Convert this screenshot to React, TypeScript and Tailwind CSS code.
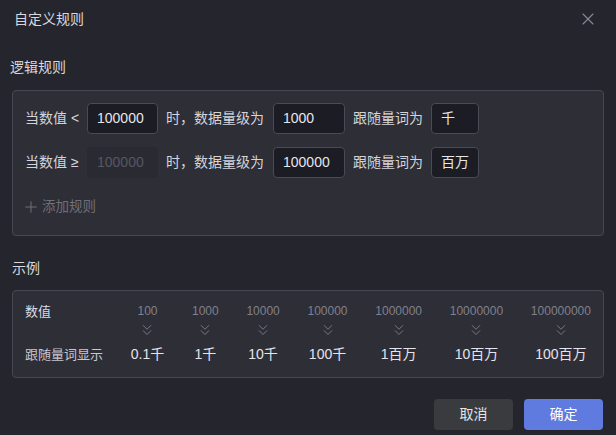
import { X, Plus, ChevronsDown } from 'lucide-react';

const FONT = { fontFamily: '"Liberation Sans", "Noto Sans CJK SC", sans-serif' };

const RULES = [
  { op: '<', from: '100000', disabled: false, level: '1000', unit: '千' },
  { op: '≥', from: '100000', disabled: true, level: '100000', unit: '百万' },
];

const EXAMPLES = [
  { value: '100', label: '0.1千' },
  { value: '1000', label: '1千' },
  { value: '10000', label: '10千' },
  { value: '100000', label: '100千' },
  { value: '1000000', label: '1百万' },
  { value: '10000000', label: '10百万' },
  { value: '100000000', label: '100百万' },
];

function Box({ value, w, disabled }: { value: string; w: string; disabled?: boolean }) {
  return (
    <div
      className={
        disabled
          ? `${w} h-[31px] rounded-[4px] bg-[#2a2a32] flex items-center px-[10px] text-[14px] text-[#575761]`
          : `${w} h-[31px] rounded-[4px] bg-[#1c1c24] border border-[#4a4a55] flex items-center px-[9px] text-[14px] text-[#e6e6ea]`
      }
    >
      <span className="overflow-hidden whitespace-nowrap">{value}</span>
    </div>
  );
}

export default function App() {
  return (
    <div className="w-[616px] h-[435px] bg-[#25252e] text-[#d4d4da] overflow-hidden" style={FONT}>
      <div className="h-[38px] flex items-center justify-between pl-[14px] pr-[18px]">
        <span className="text-[14px] text-[#d8d8de]">自定义规则</span>
        <X className="w-[20px] h-[20px] text-[#8a8a96]" strokeWidth={1.3} />
      </div>

      <div className="px-[12px]">
        <div className="mt-[19px] -ml-[2px] text-[14px] leading-[20px] text-[#d8d8de]">逻辑规则</div>

        <div className="mt-[13px] h-[146px] rounded-[4px] border border-[#474751] bg-[#2e2e37] pt-[12px] px-[12px]">
          <div className="flex flex-col gap-[13px]">
            {RULES.map((r, i) => (
              <div key={i} className="flex items-center text-[14px]">
                <span className="w-[62px]">当数值 {r.op}</span>
                <Box value={r.from} w="w-[71px]" disabled={r.disabled} />
                <span className="ml-[8px] w-[107px]">时，数据量级为</span>
                <Box value={r.level} w="w-[72px]" />
                <span className="ml-[8px] w-[78px]">跟随量词为</span>
                <Box value={r.unit} w="w-[48px]" />
              </div>
            ))}
          </div>
          <div className="mt-[19px] flex items-center gap-[2px] text-[13.5px] text-[#6f6f7a]">
            <Plus className="-ml-[3px] w-[18px] h-[18px]" strokeWidth={1.3} />
            <span>添加规则</span>
          </div>
        </div>

        <div className="mt-[22px] text-[14px] leading-[20px] text-[#d8d8de]">示例</div>

        <div className="mt-[12px] h-[88px] rounded-[4px] border border-[#474751] bg-[#2e2e37] px-[12px] flex justify-between">
          <div className="flex flex-col text-[13px] pt-[12px]">
            <span className="leading-[18px] text-[#dcdce2]">数值</span>
            <span className="mt-[25px] leading-[18px] text-[#c8c8d0]">跟随量词显示</span>
          </div>
          {EXAMPLES.map((e) => (
            <div key={e.value} className="flex flex-col items-center pt-[12px]">
              <span className="text-[12px] leading-[16px] text-[#80808c]">{e.value}</span>
              <ChevronsDown className="mt-[2px] w-[18px] h-[18px] text-[#80808c]" strokeWidth={1.2} />
              <span className="mt-[6px] text-[14px] leading-[18px] text-[#e4e4ea]">{e.label}</span>
            </div>
          ))}
        </div>
      </div>

      <div className="mt-[21px] pr-[13px] flex justify-end gap-[11px]">
        <button className="w-[79px] h-[31px] rounded-[4px] bg-[#3a3b3f] text-[14px] text-[#e4e4e8]">取消</button>
        <button className="w-[79px] h-[31px] rounded-[4px] bg-[#5f7be0] text-[14px] text-white">确定</button>
      </div>
    </div>
  );
}
